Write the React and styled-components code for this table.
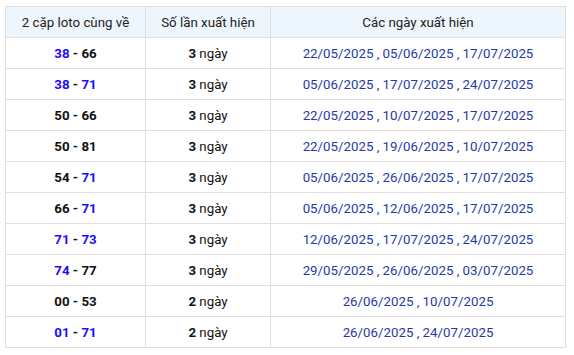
import React from "react";
import styled, { createGlobalStyle } from "styled-components";

const Global = createGlobalStyle`
  html, body { margin: 0; padding: 0; background: #fff; }
  body { font-family: Roboto, "Liberation Sans", sans-serif; }
`;

const Wrap = styled.div`
  padding: 6px 8px 0 5px;
`;

const Table = styled.table`
  width: 561px;
  border-collapse: collapse;
  table-layout: fixed;
  font-family: Roboto, "Liberation Sans", sans-serif;
  font-size: 13.3px;
  color: #111;
`;

const Th = styled.th`
  background: #eef6fd;
  border: 1px solid #dedede;
  height: 30px;
  padding: 0;
  font-weight: 400;
  color: #222;
  text-align: center;
`;

const Td = styled.td`
  border: 1px solid #dedede;
  height: 30px;
  padding: 0;
  text-align: center;
  color: ${(p) => (p.$dates ? "#1f3aa6" : "#111")};
`;

const Num = styled.b`
  font-weight: 700;
  color: ${(p) => (p.$hit ? "#1a0dff" : "#111")};
`;

const rows = [
  ["38", "66", [1, 0], 3, "22/05/2025 , 05/06/2025 , 17/07/2025"],
  ["38", "71", [1, 1], 3, "05/06/2025 , 17/07/2025 , 24/07/2025"],
  ["50", "66", [0, 0], 3, "22/05/2025 , 10/07/2025 , 17/07/2025"],
  ["50", "81", [0, 0], 3, "22/05/2025 , 19/06/2025 , 10/07/2025"],
  ["54", "71", [0, 1], 3, "05/06/2025 , 26/06/2025 , 17/07/2025"],
  ["66", "71", [0, 1], 3, "05/06/2025 , 12/06/2025 , 17/07/2025"],
  ["71", "73", [1, 1], 3, "12/06/2025 , 17/07/2025 , 24/07/2025"],
  ["74", "77", [1, 0], 3, "29/05/2025 , 26/06/2025 , 03/07/2025"],
  ["00", "53", [0, 0], 2, "26/06/2025 , 10/07/2025"],
  ["01", "71", [1, 1], 2, "26/06/2025 , 24/07/2025"],
];

export default function App() {
  return (
    <Wrap>
      <Global />
      <Table>
        <colgroup>
          <col style={{ width: 140 }} />
          <col style={{ width: 125 }} />
          <col />
        </colgroup>
        <thead>
          <tr>
            <Th>2 cặp loto cùng về</Th>
            <Th>Số lần xuất hiện</Th>
            <Th>Các ngày xuất hiện</Th>
          </tr>
        </thead>
        <tbody>
          {rows.map(([a, b, h, n, d]) => (
            <tr key={a + b}>
              <Td>
                <Num $hit={h[0]}>{a}</Num>
                <Num> - </Num>
                <Num $hit={h[1]}>{b}</Num>
              </Td>
              <Td>
                <Num>{n}</Num> ngày
              </Td>
              <Td $dates>{d}</Td>
            </tr>
          ))}
        </tbody>
      </Table>
    </Wrap>
  );
}
